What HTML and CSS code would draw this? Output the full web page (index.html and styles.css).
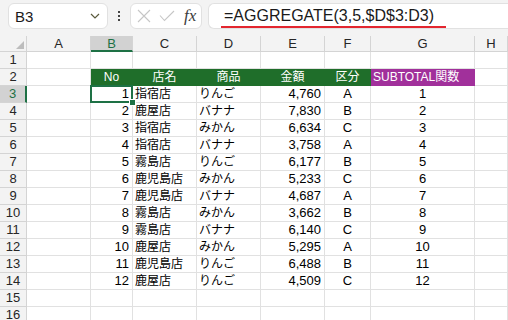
FILE: index.html
```html
<html>
<head>
    <meta charset="utf-8"/>
    <title>AGGREGATE</title>
    <link rel="stylesheet" href="styles.css">
</head>
<body>
<div id="top">
    <div id="namebox">
        <span class="ref">B3</span>
        <svg class="chev" width="10" height="6" viewBox="0 0 10 6"><path d="M1 1 L5 5 L9 1" fill="none" stroke="#5a5a3c" stroke-width="1.2"/></svg>
    </div>
    <div id="dots">
        <span></span><span></span><span></span>
    </div>
    <div id="fxbox">
        <svg width="14" height="14" viewBox="0 0 14 14"><path d="M1 1 L13 13 M13 1 L1 13" stroke="#c6c6c6" stroke-width="1.1" fill="none"/></svg>
        <svg width="16" height="12" viewBox="0 0 16 12"><path d="M1 5.5 L5.5 10.5 L15 1" stroke="#c6c6c6" stroke-width="1.1" fill="none"/></svg>
        <span class="fx">fx</span>
    </div>
    <div id="formula">
        <span class="ftext">=AGGREGATE(3,5,$D$3:D3)</span>
    </div>
</div>

<div id="sheet">
    <div class="c corner"><span class="tri"></span></div>
    <div class="c ch">A</div><div class="c ch on">B</div><div class="c ch">C</div><div class="c ch">D</div><div class="c ch">E</div><div class="c ch">F</div><div class="c ch">G</div><div class="c ch">H</div>

    <div class="c rh">1</div><div class="c"></div><div class="c"></div><div class="c"></div><div class="c"></div><div class="c"></div><div class="c"></div><div class="c"></div><div class="c"></div>

    <div class="c rh">2</div><div class="c"></div><div class="c hd">No</div><div class="c hd">店名</div><div class="c hd">商品</div><div class="c hd">金額</div><div class="c hd">区分</div><div class="c pu">SUBTOTAL関数</div><div class="c"></div>

    <div class="c rh on">3</div><div class="c"></div><div class="c num sel">1</div><div class="c txt">指宿店</div><div class="c txt">りんご</div><div class="c num">4,760</div><div class="c mid">A</div><div class="c mid">1</div><div class="c"></div>
    <div class="c rh">4</div><div class="c"></div><div class="c num">2</div><div class="c txt">鹿屋店</div><div class="c txt">バナナ</div><div class="c num">7,830</div><div class="c mid">B</div><div class="c mid">2</div><div class="c"></div>
    <div class="c rh">5</div><div class="c"></div><div class="c num">3</div><div class="c txt">指宿店</div><div class="c txt">みかん</div><div class="c num">6,634</div><div class="c mid">C</div><div class="c mid">3</div><div class="c"></div>
    <div class="c rh">6</div><div class="c"></div><div class="c num">4</div><div class="c txt">指宿店</div><div class="c txt">バナナ</div><div class="c num">3,758</div><div class="c mid">A</div><div class="c mid">4</div><div class="c"></div>
    <div class="c rh">7</div><div class="c"></div><div class="c num">5</div><div class="c txt">霧島店</div><div class="c txt">りんご</div><div class="c num">6,177</div><div class="c mid">B</div><div class="c mid">5</div><div class="c"></div>
    <div class="c rh">8</div><div class="c"></div><div class="c num">6</div><div class="c txt">鹿児島店</div><div class="c txt">みかん</div><div class="c num">5,233</div><div class="c mid">C</div><div class="c mid">6</div><div class="c"></div>
    <div class="c rh">9</div><div class="c"></div><div class="c num">7</div><div class="c txt">鹿児島店</div><div class="c txt">バナナ</div><div class="c num">4,687</div><div class="c mid">A</div><div class="c mid">7</div><div class="c"></div>
    <div class="c rh">10</div><div class="c"></div><div class="c num">8</div><div class="c txt">霧島店</div><div class="c txt">みかん</div><div class="c num">3,662</div><div class="c mid">B</div><div class="c mid">8</div><div class="c"></div>
    <div class="c rh">11</div><div class="c"></div><div class="c num">9</div><div class="c txt">霧島店</div><div class="c txt">バナナ</div><div class="c num">6,140</div><div class="c mid">C</div><div class="c mid">9</div><div class="c"></div>
    <div class="c rh">12</div><div class="c"></div><div class="c num">10</div><div class="c txt">鹿屋店</div><div class="c txt">みかん</div><div class="c num">5,295</div><div class="c mid">A</div><div class="c mid">10</div><div class="c"></div>
    <div class="c rh">13</div><div class="c"></div><div class="c num">11</div><div class="c txt">鹿児島店</div><div class="c txt">りんご</div><div class="c num">6,488</div><div class="c mid">B</div><div class="c mid">11</div><div class="c"></div>
    <div class="c rh">14</div><div class="c"></div><div class="c num">12</div><div class="c txt">鹿屋店</div><div class="c txt">りんご</div><div class="c num">4,509</div><div class="c mid">C</div><div class="c mid">12</div><div class="c"></div>

    <div class="c rh">15</div><div class="c"></div><div class="c"></div><div class="c"></div><div class="c"></div><div class="c"></div><div class="c"></div><div class="c"></div><div class="c"></div>
    <div class="c rh">16</div><div class="c"></div><div class="c"></div><div class="c"></div><div class="c"></div><div class="c"></div><div class="c"></div><div class="c"></div><div class="c"></div>
</div>
</body>
</html>
```

FILE: styles.css
```css
body, html {
    margin: 0px;
    padding: 0px;
}

body {
    width: 508px;
    height: 320px;
    overflow: hidden;
    background-color: #ffffff;
    font-family: 'Liberation Sans', 'Noto Sans CJK JP', sans-serif;
}

#top {
    height: 36px;
    box-sizing: border-box;
    padding-top: 3px;
    background-color: #f3f3f3;
    display: flex;
    flex-direction: row;
    align-items: flex-start;
}

#namebox {
    margin-left: 8px;
    width: 100px;
    height: 26px;
    box-sizing: border-box;
    background-color: #ffffff;
    border: 1px solid #e1e1e1;
    border-radius: 6px;
    display: flex;
    align-items: center;
    justify-content: space-between;
    padding: 0px 7px 0px 6px;
}

.ref {
    font-size: 15px;
    color: #1a1a1a;
}

#dots {
    width: 22px;
    height: 26px;
    display: flex;
    flex-direction: column;
    align-items: center;
    justify-content: center;
    gap: 2px;
}

#dots span {
    width: 2px;
    height: 2px;
    background-color: #444444;
}

#fxbox {
    width: 72px;
    height: 26px;
    box-sizing: border-box;
    background-color: #ffffff;
    border: 1px solid #e1e1e1;
    border-radius: 6px;
    display: flex;
    align-items: center;
    padding-left: 6px;
    gap: 8px;
}

.fx {
    font-family: 'Liberation Serif', serif;
    font-style: italic;
    font-size: 17px;
    color: #3c3c3c;
    margin-left: 1px;
}

#formula {
    flex: 1;
    margin-left: 6px;
    height: 26px;
    box-sizing: border-box;
    background-color: #ffffff;
    border: 1px solid #e1e1e1;
    border-right: none;
    border-radius: 6px 0px 0px 6px;
    padding-left: 12px;
    display: flex;
    align-items: center;
}

.ftext {
    font-size: 16px;
    color: #1a1a1a;
    line-height: 20px;
    padding: 0px 12px 0px 3px;
    border-bottom: 2px solid #e3262f;
    margin-top: 2px;
}

#sheet {
    display: grid;
    grid-template-columns: 27px 64px 42px 64px 64px 64px 46px 104px 1fr;
    grid-template-rows: 16px;
    grid-auto-rows: 17px;
}

.c {
    box-sizing: border-box;
    border-right: 1px solid #e1e1e1;
    border-bottom: 1px solid #e1e1e1;
    font-size: 13px;
    color: #000000;
    line-height: 16px;
    white-space: nowrap;
    overflow: visible;
}

.corner {
    position: relative;
    background-color: #f3f3f3;
    border-color: #d4d4d4;
}

.tri {
    position: absolute;
    right: 2px;
    bottom: 2px;
    width: 0;
    height: 0;
    border-left: 8px solid transparent;
    border-bottom: 8px solid #bdbdbd;
}

.ch {
    background-color: #f3f3f3;
    border-color: #d4d4d4;
    text-align: center;
    color: #262626;
    line-height: 15px;
}

.ch.on {
    background-color: #d2d2d2;
    border-bottom: 2px solid #1e7145;
    color: #1e7145;
}

.rh {
    background-color: #f3f3f3;
    border-color: #d4d4d4;
    text-align: center;
    color: #262626;
}

.rh.on {
    background-color: #d2d2d2;
    border-right: 2px solid #1e7145;
    color: #1e7145;
}

.hd {
    background-color: #1f6e2a;
    border-color: #1f6e2a;
    color: #ffffff;
    font-size: 12px;
    text-align: center;
}

.pu {
    background-color: #a1309b;
    border-color: #a1309b;
    color: #ffffff;
    font-size: 12px;
    padding-left: 2px;
}

.num {
    text-align: right;
    padding-right: 3px;
}

.txt {
    font-size: 12px;
    padding-left: 2px;
}

.mid {
    text-align: center;
}

.sel {
    position: relative;
}

.sel::before {
    content: '';
    position: absolute;
    left: -1px;
    top: -1px;
    right: -1px;
    bottom: -1px;
    border: 2px solid #1e7145;
}

.sel::after {
    content: '';
    position: absolute;
    right: -4px;
    bottom: -4px;
    width: 5px;
    height: 5px;
    background-color: #1e7145;
    border: 1px solid #ffffff;
}
```
